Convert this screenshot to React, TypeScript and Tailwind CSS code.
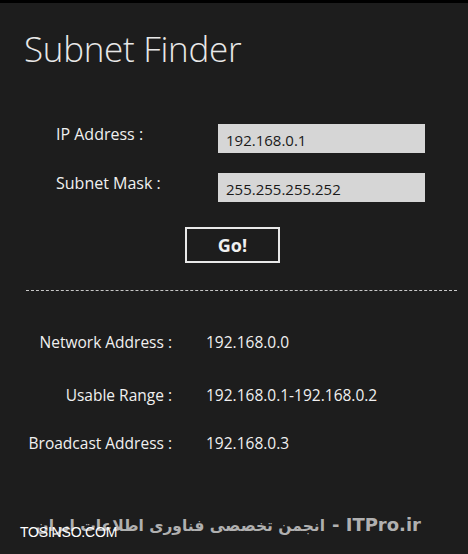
import React, { useState } from 'react';

const App: React.FC = () => {
  const [ip, setIp] = useState('192.168.0.1');
  const [mask, setMask] = useState('255.255.255.252');

  return (
    <div className="w-[468px] h-[554px] bg-[#1d1d1d] border-t-[3px] border-black flex flex-col text-[#f0f0f0] font-['Open_Sans',sans-serif] overflow-hidden">
      <h1 className="pl-[24px] pt-[24px] text-[35px] leading-[44px] font-light text-[#e8e8e8] tracking-[-0.3px]">Subnet Finder</h1>

      {/* inputs */}
      <div className="mt-[53px] flex flex-col gap-[20px]">
        <div className="flex items-start">
          <label className="w-[218px] pl-[56px] text-[16px] leading-[20px]">IP Address :</label>
          <input
            value={ip}
            onChange={(e) => setIp(e.target.value)}
            className="w-[207px] h-[29px] bg-[#d6d6d6] text-[#1a1a1a] text-[15px] px-[8px] pt-[3px] outline-none"
          />
        </div>
        <div className="flex items-start">
          <label className="w-[218px] pl-[56px] text-[16px] leading-[20px]">Subnet Mask :</label>
          <input
            value={mask}
            onChange={(e) => setMask(e.target.value)}
            className="w-[207px] h-[29px] bg-[#d6d6d6] text-[#1a1a1a] text-[15px] px-[8px] pt-[3px] outline-none"
          />
        </div>
      </div>

      <button className="mt-[25px] ml-[185px] w-[95px] h-[36px] border-2 border-[#e8e8e8] text-[18px] font-bold leading-none">
        Go!
      </button>

      <div className="mt-[27px] ml-[26px] w-[431px] border-t border-dashed border-[#c8c8c8]" />

      {/* results */}
      <div className="mt-[40px] grid grid-cols-[172px_1fr] gap-x-[34px] text-[15.5px] leading-[22px]">
        <span className="text-right">Network Address :</span>
        <span>192.168.0.0</span>
        <span className="text-right mt-[31px]">Usable Range :</span>
        <span className="mt-[31px]">192.168.0.1-192.168.0.2</span>
        <span className="text-right mt-[26px]">Broadcast Address :</span>
        <span className="mt-[26px]">192.168.0.3</span>
      </div>

      {/* watermark */}
      <div className="relative mt-auto h-[40px]">
        <div
          dir="ltr"
          className="absolute right-[47px] top-[-3px] flex items-baseline gap-[7px] font-bold text-[#b0b0b0] whitespace-nowrap font-['DejaVu_Sans',sans-serif]"
        >
          <span dir="rtl" className="text-[15.5px]">انجمن تخصصی فناوری اطلاعات ایران</span>
          <span className="text-[18px]">- ITPro.ir</span>
        </div>
        <div className="absolute left-[20px] top-[8px] text-[14px] text-white font-['Liberation_Sans',sans-serif] tracking-[-0.2px]">
          TOSINSO.COM
        </div>
      </div>
    </div>
  );
};

export default App;
